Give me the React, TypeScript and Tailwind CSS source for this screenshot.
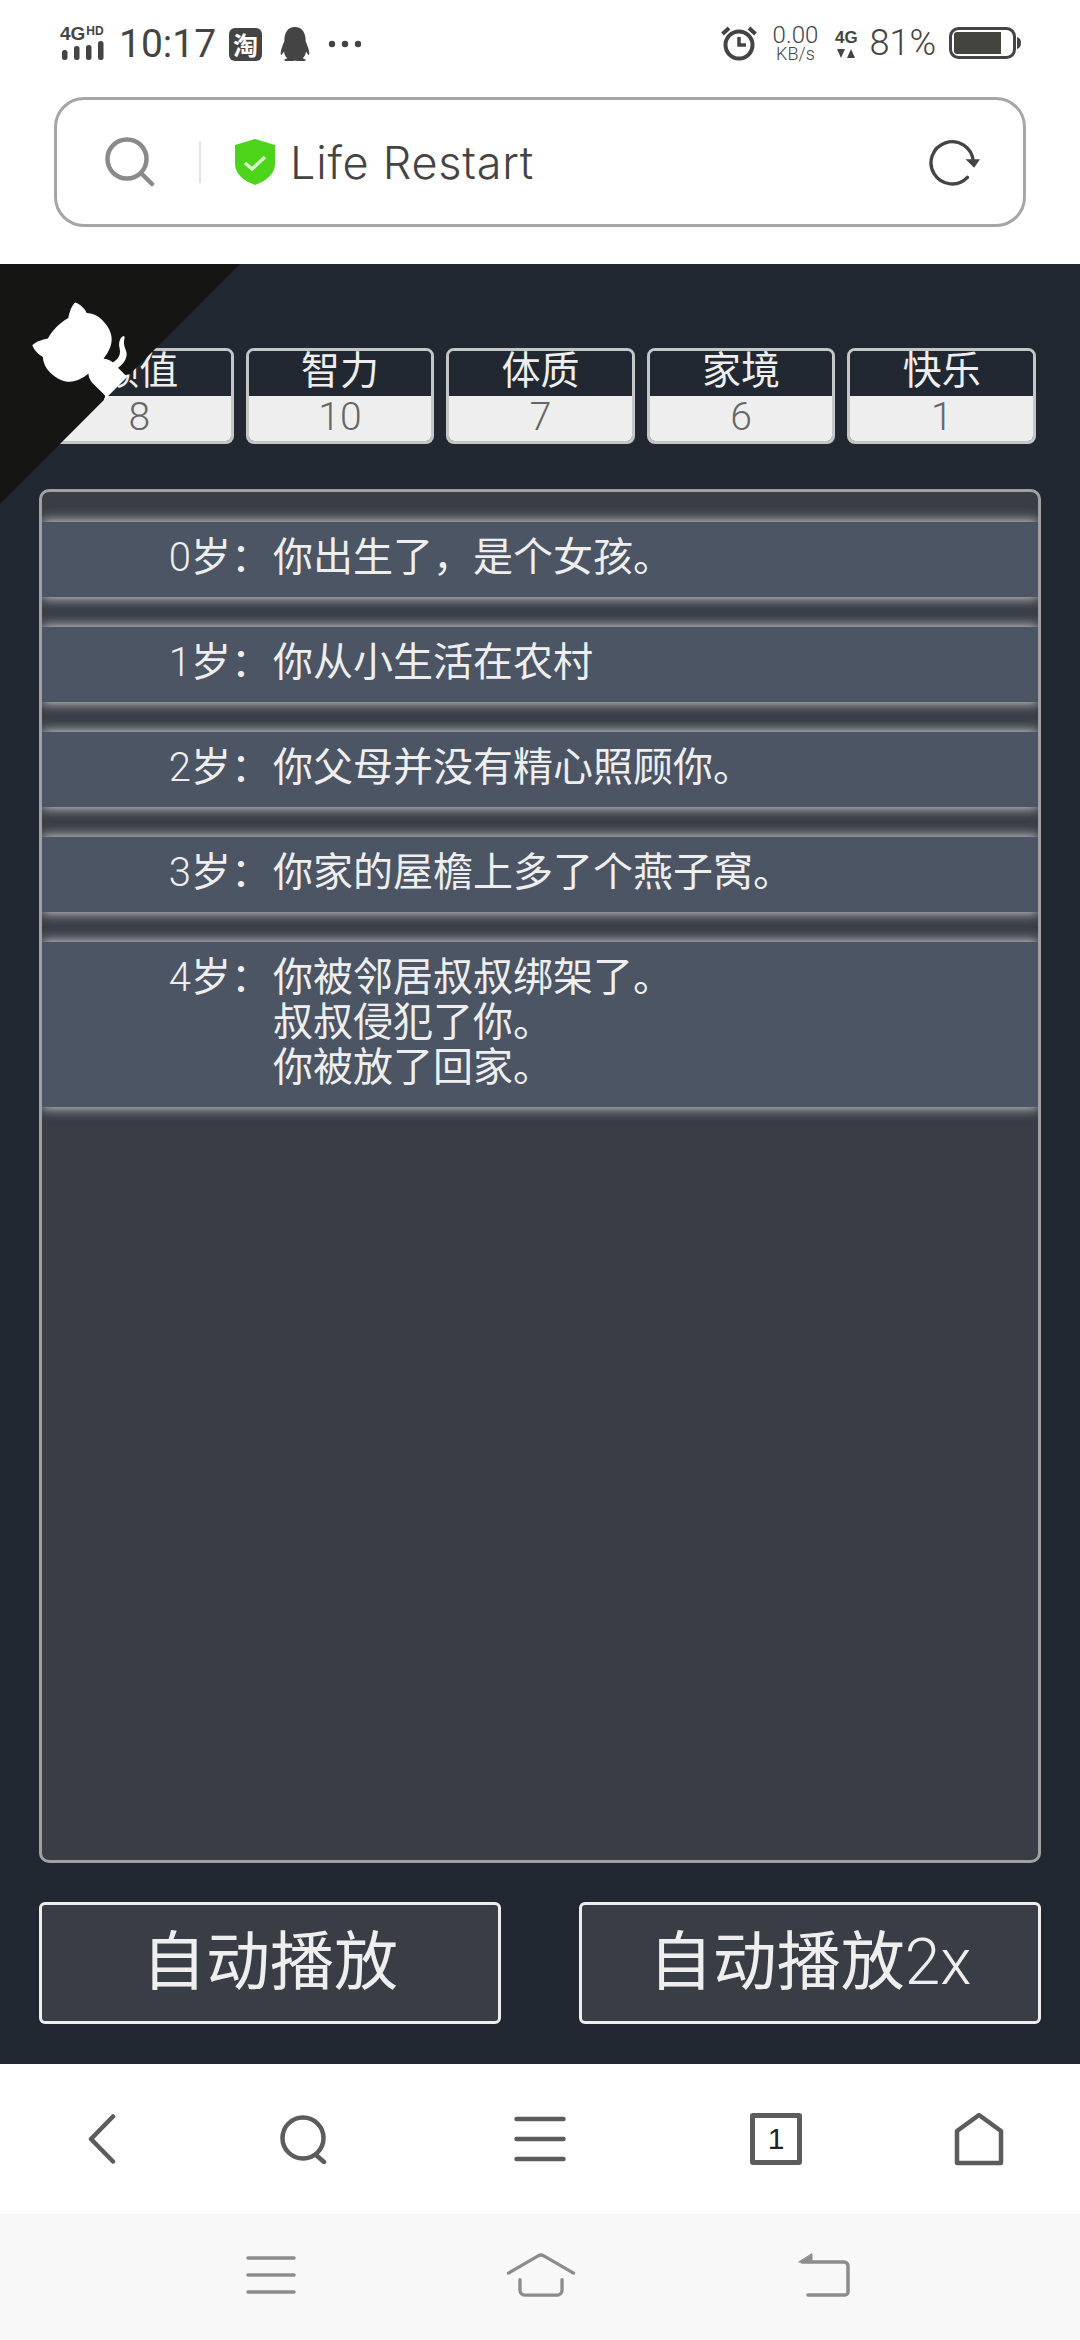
import { FaQq } from "react-icons/fa";

const attributes = [
  { name: "颜值", value: 8 },
  { name: "智力", value: 10 },
  { name: "体质", value: 7 },
  { name: "家境", value: 6 },
  { name: "快乐", value: 1 },
];

const events = [
  { age: 0, lines: ["你出生了，是个女孩。"] },
  { age: 1, lines: ["你从小生活在农村"] },
  { age: 2, lines: ["你父母并没有精心照顾你。"] },
  { age: 3, lines: ["你家的屋檐上多了个燕子窝。"] },
  { age: 4, lines: ["你被邻居叔叔绑架了。", "叔叔侵犯了你。", "你被放了回家。"] },
];

function StatusBar() {
  return (
    <div className="flex h-[97px] items-start justify-between pl-[60px] pr-[58px] pt-[24px] text-[#444444]">
      <div className="flex items-center">
        <div className="flex w-[46px] flex-col">
          <div className="flex items-start font-['Liberation_Sans',sans-serif] font-bold leading-none">
            <span className="text-[19px] leading-[14px]">4G</span>
            <span className="ml-[1px] text-[12px] leading-[9px]">HD</span>
          </div>
          <svg width="46" height="21" viewBox="0 0 46 21" fill="#444444" className="mt-[-1px]">
            <rect x="2" y="10" width="5.500" height="10" rx="2.500" />
            <rect x="14" y="6" width="5.500" height="14" rx="2.500" />
            <rect x="26" y="5" width="5.500" height="15" rx="2.500" />
            <rect x="38" y="1" width="5.500" height="19" rx="2.500" />
          </svg>
        </div>
        <span className="ml-[13px] font-['Roboto',sans-serif] text-[39px] leading-[40px]">10:17</span>
        <div className="ml-[13px] flex h-[33px] w-[33px] items-center justify-center rounded-[6px] bg-[#444444] font-['Noto_Sans_CJK_SC',sans-serif] text-[25px] font-bold leading-none text-white">
          淘
        </div>
        <FaQq className="ml-[18px] h-[34px] w-[30px] text-[#444444]" />
        <svg width="34" height="8" viewBox="0 0 34 8" fill="#444444" className="ml-[18px]">
          <circle cx="4" cy="4" r="3.200" />
          <circle cx="17" cy="4" r="3.200" />
          <circle cx="30" cy="4" r="3.200" />
        </svg>
      </div>
      <div className="flex items-center">
        <svg width="36" height="36" viewBox="0 0 36 36" fill="none" stroke="#444444" strokeWidth="4">
          <circle cx="18" cy="20" r="13.500" />
          <path d="M18 12v8h7" strokeWidth="3.500" />
          <path d="M1.500 9 8 3M34.500 9 28 3" strokeWidth="4" />
        </svg>
        <div className="ml-[14px] flex w-[48px] flex-col items-center font-['Roboto',sans-serif] font-light leading-none">
          <span className="text-[24px] leading-[22px]">0.00</span>
          <span className="text-[18px] leading-[16px]">KB/s</span>
        </div>
        <div className="ml-[14px] flex w-[26px] flex-col items-center">
          <span className="font-['Liberation_Sans',sans-serif] text-[17px] font-bold leading-[18px]">4G</span>
          <svg width="20" height="9" viewBox="0 0 20 9" fill="#444444" className="mt-[2px]">
            <path d="M1 0h8L5 9zM11 9h8l-4-9z" />
          </svg>
        </div>
        <span className="ml-[10px] font-['Roboto',sans-serif] text-[36px] font-light leading-[36px]">81%</span>
        <svg width="73" height="32" viewBox="0 0 73 32" className="ml-[13px]">
          <rect x="1.500" y="1.500" width="64" height="29" rx="8" fill="none" stroke="#444444" strokeWidth="3" />
          <path d="M8 5h44v22H8a3 3 0 0 1-3-3V8a3 3 0 0 1 3-3z" fill="#44443f" />
          <path d="M68 10c3 1 4 3 4 6s-1 5-4 6z" fill="#444444" />
        </svg>
      </div>
    </div>
  );
}

function AddressBar() {
  return (
    <div className="bg-white pb-[37px]">
      <div className="mx-[54px] flex h-[130px] w-[972px] items-center rounded-[30px] border-[3px] border-[#a6a6a6] pl-[48px] pr-[43px]">
        <svg width="50" height="50" viewBox="0 0 50 50" fill="none" stroke="#8a8a8a" strokeWidth="4.500" strokeLinecap="round">
          <circle cx="22" cy="22" r="19.500" />
          <path d="m36 36 11 11" />
        </svg>
        <div className="ml-[44px] h-[42px] w-[2px] bg-[#e4e4e4]" />
        <svg width="40" height="46" viewBox="0 0 40 46" className="ml-[34px]">
          <path d="M20 0 40 6v19c0 10-9 17-20 21C9 42 0 35 0 25V6z" fill="#4cd41a" />
          <path d="m10 24 7 6 13-12" fill="none" stroke="#d8f5c8" strokeWidth="3.500" />
        </svg>
        <span className="ml-[15px] font-['Inter',sans-serif] text-[45px] font-light leading-none tracking-[0.75px] text-[#444444]">Life Restart</span>
        <svg width="52" height="48" viewBox="0 0 54 50" fill="none" className="ml-auto mt-[2px]">
          <path d="M41 40a22 22 0 1 1 6-17" stroke="#444444" strokeWidth="3.500" strokeLinecap="round" />
          <path d="m39 21 15 0-6 9z" fill="#444444" />
        </svg>
      </div>
    </div>
  );
}

function GithubCorner() {
  return (
    <svg viewBox="0 0 250 250" className="absolute left-0 top-0 h-[240px] w-[240px] -scale-x-100">
      <path d="M0,0 L115,115 L130,115 L142,142 L250,250 L250,0 Z" fill="#151513" />
      <path
        d="M128.3,109.0 C113.8,99.7 119.0,89.6 119.0,89.6 C122.0,82.7 120.5,78.6 120.5,78.6 C119.2,72.0 123.4,76.3 123.4,76.3 C127.3,80.9 125.5,87.3 125.5,87.3 C122.9,97.6 130.6,101.9 134.4,103.2"
        fill="#ffffff"
      />
      <path
        d="M115.0,115.0 C114.9,115.1 118.7,116.5 119.8,115.4 L133.7,101.6 C136.9,99.2 139.9,98.4 142.2,98.6 C133.8,88.0 127.5,74.4 143.8,58.0 C148.5,53.4 154.0,51.2 159.7,51.0 C160.3,49.4 163.2,43.6 171.4,40.1 C171.4,40.1 176.1,42.5 178.8,56.2 C183.1,58.6 187.2,61.8 190.9,65.4 C194.5,69.0 197.7,73.2 200.1,77.6 C213.8,80.2 216.3,84.9 216.3,84.9 C212.7,93.1 206.9,96.0 205.4,96.6 C205.1,102.4 203.0,107.8 198.3,112.5 C181.9,128.9 168.3,122.5 157.7,114.1 C157.9,116.9 156.7,120.9 152.7,124.9 L141.0,136.5 C139.8,137.7 141.6,141.9 141.8,141.8 Z"
        fill="#ffffff"
      />
    </svg>
  );
}

function AttributeBar() {
  return (
    <div className="grid grid-cols-5 gap-[12px] pl-[45px] pr-[44px] pt-[84px]">
      {attributes.map((item) => (
        <div key={item.name} className="h-[96px] overflow-hidden rounded-[8px] border-[3px] border-[#c4c6c8] text-center">
          <div className="h-[45px] bg-[#222831] text-[39px] leading-[40px] text-[#eeeeee]">{item.name}</div>
          <div className="h-[45px] bg-[#eeeeee] text-[39px] font-light leading-[42px] text-[#666666]">{item.value}</div>
        </div>
      ))}
    </div>
  );
}

function Timeline() {
  return (
    <div className="mx-[39px] mt-[45px] flex h-[1374px] flex-col gap-[30px] overflow-hidden rounded-[10px] border-[3px] border-[#9fa1a4] bg-[#393e46] pt-[30px]">
      {events.map((event) => (
        <div key={event.age} className="flex bg-[#4b5563] pb-[17px] pt-[13px] text-[40px] leading-[45px] text-[#eeeeee] shadow-[0_0_12px_#eeeeee]">
          <div className="w-[229px] shrink-0 text-right">
            <span className="font-light">{event.age}</span>岁：
          </div>
          <div className="ml-[2px]">
            {event.lines.map((line) => (
              <div key={line}>{line}</div>
            ))}
          </div>
        </div>
      ))}
    </div>
  );
}

function BrowserNav() {
  return (
    <div className="flex h-[150px] items-center bg-white pl-[88px]">
      <svg width="28" height="50" viewBox="0 0 28 50" fill="none" stroke="#5c5c5c" strokeWidth="4.500" strokeLinecap="round" strokeLinejoin="round">
        <path d="M25 2.500 3 25l22 22.500" />
      </svg>
      <svg width="48" height="50" viewBox="0 0 48 50" fill="none" stroke="#5c5c5c" strokeWidth="4.500" strokeLinecap="round" className="ml-[164px]">
        <circle cx="23" cy="24" r="20.500" />
        <path d="m36 41 8 7" />
      </svg>
      <svg width="52" height="46" viewBox="0 0 52 46" fill="none" stroke="#5c5c5c" strokeWidth="4.500" strokeLinecap="round" className="ml-[186px]">
        <path d="M2.500 3h47M2.500 23h47M2.500 43h47" />
      </svg>
      <div className="ml-[184px] flex h-[52px] w-[52px] items-center justify-center rounded-[3px] border-[5px] border-[#5c5c5c] font-['Liberation_Sans',sans-serif] text-[30px] leading-none text-[#222222]">
        1
      </div>
      <svg width="50" height="54" viewBox="0 0 50 54" fill="none" stroke="#5c5c5c" strokeWidth="4.500" strokeLinejoin="round" className="ml-[152px]">
        <path d="M25 3 47 19v32H3V19z" />
      </svg>
    </div>
  );
}

function SystemNav() {
  return (
    <div className="flex h-[126px] items-center bg-[#f8f8f8] pb-[4px] pl-[246px]">
      <svg width="50" height="38" viewBox="0 0 50 38" fill="none" stroke="#8c8c8c" strokeWidth="3.500" strokeLinecap="round">
        <path d="M2 2h46M2 19h46M2 36h46" />
      </svg>
      <svg width="70" height="44" viewBox="0 0 72 46" fill="none" stroke="#8c8c8c" strokeWidth="3.500" strokeLinecap="round" strokeLinejoin="round" className="ml-[210px]">
        <path d="M2 21 33 3a6 6 0 0 1 6 0l31 18" />
        <path d="M14 28v11a5 5 0 0 0 5 5h34a5 5 0 0 0 5-5V28" />
      </svg>
      <svg width="52" height="44" viewBox="0 0 52 44" fill="none" stroke="#8c8c8c" strokeWidth="3.500" strokeLinecap="round" strokeLinejoin="round" className="ml-[222px]">
        <path d="M4 9h42a4 4 0 0 1 4 4v26a3 3 0 0 1-3 3H10" />
        <path d="M14 1v8H1z" fill="#8c8c8c" strokeWidth="1" />
      </svg>
    </div>
  );
}

export default function App() {
  return (
    <div className="h-[2340px] w-[1080px] overflow-hidden bg-white font-['Roboto','Noto_Sans_CJK_SC',sans-serif]">
      <StatusBar />
      <AddressBar />
      <main className="relative h-[1800px] bg-[#222831]">
        <AttributeBar />
        <Timeline />
        <div className="mt-[39px] flex justify-between px-[39px]">
          <button className="h-[122px] w-[462px] rounded-[6px] border-[3px] border-[#eeeeee] bg-[#393e46] text-[64px] text-[#eeeeee]">
            自动播放
          </button>
          <button className="h-[122px] w-[462px] rounded-[6px] border-[3px] border-[#eeeeee] bg-[#393e46] text-[64px] text-[#eeeeee]">
            自动播放<span className="font-light">2x</span>
          </button>
        </div>
        <GithubCorner />
      </main>
      <BrowserNav />
      <SystemNav />
    </div>
  );
}
